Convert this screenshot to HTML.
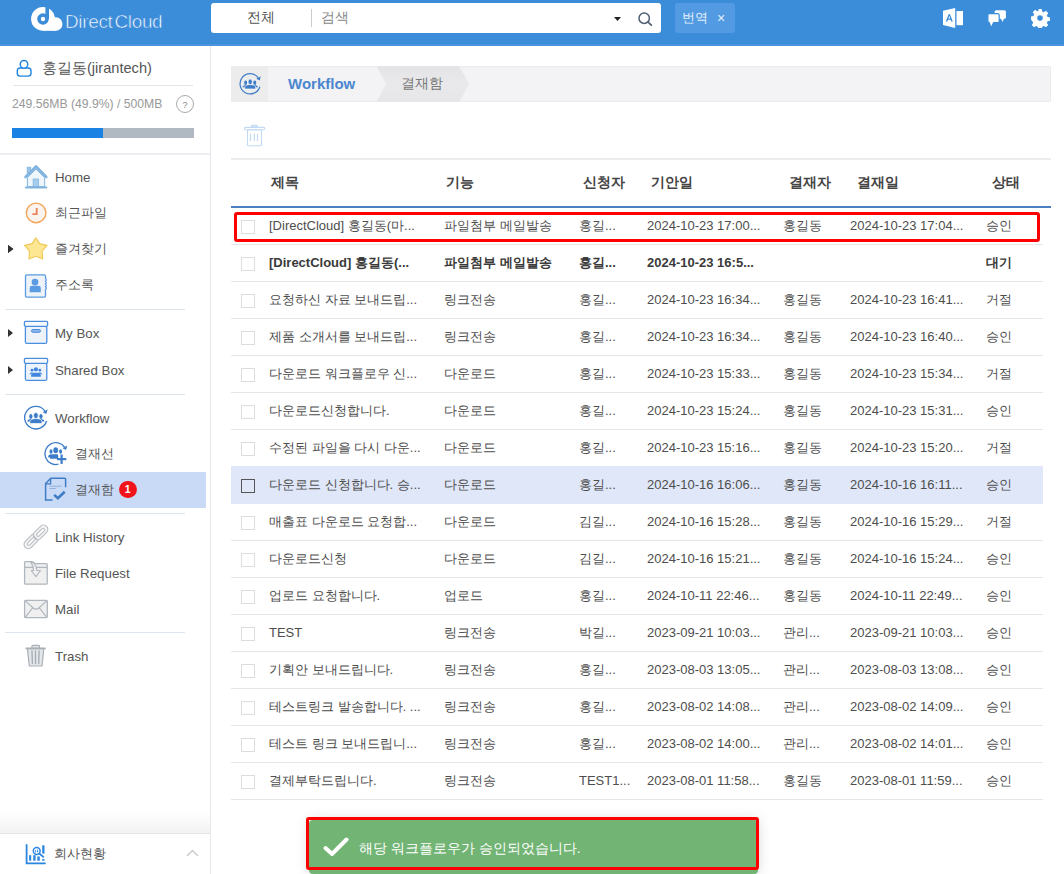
<!DOCTYPE html>
<html><head><meta charset="utf-8">
<style>
*{box-sizing:border-box;margin:0;padding:0}
html,body{width:1064px;height:874px;overflow:hidden;background:#fff;font-family:"Liberation Sans",sans-serif;color:#444}
.abs{position:absolute}
#hdr{position:absolute;left:0;top:0;width:1064px;height:46px;background:#3b8dda;border-bottom:2px solid #4a95de}
#logo-t{position:absolute;left:65px;top:11px;font-size:19px;color:#fff;letter-spacing:-0.35px;word-spacing:-3px;-webkit-text-stroke:0.6px #3b8dda}
#search{position:absolute;left:211px;top:3px;width:450px;height:30px;background:#fff;border-radius:3px}
#search .t1{position:absolute;left:36px;top:6px;font-size:14px;color:#555}
#search .sep{position:absolute;left:100px;top:6px;width:1px;height:18px;background:#ccc}
#search .t2{position:absolute;left:110px;top:6px;font-size:14px;color:#888}
#trans{position:absolute;left:675px;top:3px;width:60px;height:30px;background:#529ae2;border-radius:3px}
#trans .t{position:absolute;left:7px;top:7px;font-size:12.5px;color:#e6f0fb}
#trans .x{position:absolute;left:42px;top:7px;font-size:14px;color:#e6f0fb}
#side{position:absolute;left:0;top:46px;width:211px;height:828px;border-right:1px solid #e6e8ee;background:#fff}
.nav{position:absolute;left:55px;font-size:13.3px;color:#555;line-height:16px}
.sep{position:absolute;left:5px;width:180px;height:1px;background:#dde4ec}
.tri{position:absolute;left:8px;width:0;height:0;border-top:4px solid transparent;border-bottom:4px solid transparent;border-left:5px solid #333}
#main{position:absolute;left:211px;top:46px;width:853px;height:828px}
.row{position:absolute;left:231px;width:812px;height:37px;border-bottom:1px solid #e6e6e8;font-size:13px;color:#4d4d4d}
.row .c{position:absolute;top:10px;line-height:16px;white-space:nowrap}
.row .cb{position:absolute;left:10px;top:12px;width:14px;height:14px;border:1px solid #ddd;background:#fff}
.row.sel{background:#dfe7f8;margin-top:-1px;height:38px;border-bottom-color:#dfe7f8}
.row.sel .c{top:11px}
.row.sel .cb{top:13px}
.row.sel .cb{border-color:#555;background:transparent}
.row.bold{font-weight:bold;color:#3a3a3a}
.th{position:absolute;top:174px;font-size:14px;font-weight:bold;color:#444;line-height:16px}
</style></head><body>
<svg width="0" height="0" style="position:absolute"><defs>
<g id="wf">
  <path d="M10.4 3.2 A10.9 10.9 0 1 1 8.6 -6.7" fill="none" stroke="#3c7cc8" stroke-width="1.3"/>
  <path d="M11.3 -8.2 L6.6 -5.4 L10.2 -3.6 Z" fill="#3c7cc8"/>
  <g fill="#3c7cc8">
    <ellipse cx="-4.9" cy="-1.1" rx="1.6" ry="2.4"/><path d="M-8.4 3.6 Q-8.1 1.4 -5 1.2 L-3.2 1.5 L-4 4Z"/>
    <ellipse cx="4.9" cy="-1.1" rx="1.6" ry="2.4"/><path d="M8.4 3.6 Q8.1 1.4 5 1.2 L3.2 1.5 L4 4Z"/>
  </g>
  <g fill="#3c7cc8" stroke="#fff" stroke-width="0.7">
    <path d="M-6 5.6 V4.6 Q-6 1.3 -1.6 0.9 H1.6 Q6 1.3 6 4.6 V5.6Z"/>
    <ellipse cx="0" cy="-2.1" rx="2.3" ry="3"/>
  </g>
</g></defs></svg>
<div id="hdr"></div>
<svg class="abs" style="left:28px;top:4px" width="38" height="30" viewBox="0 0 38 30">
  <g fill="#fff"><circle cx="15" cy="14.9" r="11.9"/><circle cx="27.7" cy="20" r="6.8"/><rect x="15" y="14" width="12.7" height="12.8"/></g>
  <circle cx="15" cy="15" r="4" fill="none" stroke="#3b8dda" stroke-width="3.6"/>
  <rect x="17.4" y="0" width="3.6" height="15" fill="#3b8dda"/>
</svg>
<div id="logo-t">Direct Cloud</div>
<div id="search"><span class="t1">전체</span><span class="sep"></span><span class="t2">검색</span>
  <svg class="abs" style="left:403px;top:14px" width="7" height="4"><path d="M0 0 L7 0 L3.5 4Z" fill="#222"/></svg>
  <svg class="abs" style="left:427px;top:8px" width="17" height="17" viewBox="0 0 17 17"><circle cx="6.2" cy="7.2" r="5.2" fill="none" stroke="#4d5f72" stroke-width="1.5"/><path d="M10 11 L13.3 14.2" stroke="#4d5f72" stroke-width="1.7" stroke-linecap="round"/></svg>
</div>
<div id="trans"><span class="t">번역</span><span class="x">×</span></div>
<!-- right icons -->
<svg class="abs" style="left:942px;top:8px" width="22" height="21" viewBox="0 0 22 21">
  <path d="M1 2.8 L13.2 0 L13.2 20 L1 17 Z" fill="#fff"/><rect x="14.5" y="3" width="6.5" height="14.2" fill="#fff"/>
  <path d="M3.8 13.5 L6.6 6.2 H8 L10.8 13.5 H9.2 L8.6 11.8 H6 L5.4 13.5 Z M6.4 10.5 H8.2 L7.3 7.8Z" fill="#3b8dda"/>
</svg>
<svg class="abs" style="left:986px;top:9px" width="21" height="18" viewBox="0 0 21 18">
  <rect x="8.6" y="1.2" width="11.3" height="8.5" rx="1.5" fill="#fff"/>
  <path d="M14.5 9 L18 9 L16.8 13 Z" fill="#fff"/>
  <rect x="1.9" y="4.6" width="11.3" height="9" rx="1.5" fill="#fff" stroke="#3b8dda" stroke-width="1.2"/>
  <path d="M3.6 13 L7.2 13 L5.2 17.2 Z" fill="#fff"/>
</svg>
<svg class="abs" style="left:1030px;top:8px" width="20" height="20" viewBox="0 0 20 20">
  <g transform="translate(10 10.1) scale(0.9) translate(-10 -10)">
  <path fill="#fff" fill-rule="evenodd" d="M8.1 0h3.8l.5 2.7 1.9.8 2.3-1.6 2.6 2.6-1.6 2.3.8 1.9 2.7.5v3.8l-2.7.5-.8 1.9 1.6 2.3-2.6 2.6-2.3-1.6-1.9.8-.5 2.7H8.1l-.5-2.7-1.9-.8-2.3 1.6-2.6-2.6 1.6-2.3-.8-1.9L0 11.9V8.1l2.7-.5.8-1.9L1.9 3.4l2.6-2.6 2.3 1.6 1.9-.8zM10 6.9a3.1 3.1 0 1 0 0 6.2 3.1 3.1 0 1 0 0-6.2z"/>
  </g>
</svg>

<div id="side"></div>
<!-- user -->
<svg class="abs" style="left:8px;top:54px" width="32" height="30" viewBox="0 0 32 30">
  <rect x="9.3" y="14" width="13.7" height="8.1" rx="2.8" fill="none" stroke="#1f86e0" stroke-width="1.4"/>
  <circle cx="16" cy="10.3" r="3.8" fill="#fff" stroke="#1f86e0" stroke-width="1.4"/>
</svg>
<div class="abs" style="left:42px;top:59px;font-size:14.6px;color:#555">홍길동(jirantech)</div>
<div class="abs" style="left:13px;top:85px;width:180px;height:1px;background:#e4e4e4"></div>
<div class="abs" style="left:12px;top:97px;font-size:12.2px;color:#999">249.56MB (49.9%) / 500MB</div>
<div class="abs" style="left:176px;top:95px;width:18px;height:18px;border:1px solid #aaa;border-radius:50%;font-size:9px;color:#888;text-align:center;line-height:18px">?</div>
<div class="abs" style="left:12px;top:128px;width:182px;height:10px;background:#b0b8c1"><div style="width:91px;height:10px;background:#1a82e2"></div></div>
<div class="abs" style="left:0;top:153px;width:210px;height:2px;background:#eceef2"></div>

<!-- sidebar icons -->
<div class="abs" style="left:0;top:810px;width:210px;height:24px;background:linear-gradient(to bottom,rgba(0,0,0,0),rgba(0,0,0,0.05))"></div>
<div class="abs" style="left:0;top:833px;width:210px;height:41px;background:#fff;border-top:1px solid #e4e4e4"></div>

<div class="abs" style="left:0;top:472px;width:206px;height:36px;background:#c9daf6"></div>

<svg class="abs" style="left:20px;top:160px" width="32" height="32" viewBox="0 0 32 32">
  <path d="M7.4 17.7 V26.6 H24.7 V17.7 L16 9 Z" fill="#eef5fb" stroke="#7fb3de" stroke-width="1"/>
  <rect x="7.2" y="7.2" width="3.5" height="6" fill="#9cc4e6" stroke="#7fb3de" stroke-width="0.8"/>
  <path d="M5.5 17 L16 6.5 L26.3 17" fill="none" stroke="#80b4df" stroke-width="2.6" stroke-linecap="round" stroke-linejoin="round"/>
  <rect x="13.2" y="19" width="5.3" height="7.5" fill="#a6cdee" stroke="#7fb3de" stroke-width="0.8"/>
  <path d="M6 27.5 H26.3" stroke="#80b4df" stroke-width="2.2" stroke-linecap="round"/>
</svg>
<svg class="abs" style="left:20px;top:196px" width="32" height="32" viewBox="0 0 32 32">
  <circle cx="16.1" cy="16.9" r="9.8" fill="#faf3ee" stroke="#f2a65a" stroke-width="1.4"/>
  <path d="M16.7 12.1 V18.1 H12.4" fill="none" stroke="#e8845e" stroke-width="1.9"/>
</svg>
<svg class="abs" style="left:4px;top:232px" width="48" height="36" viewBox="0 0 48 36">
  <path d="M4 13 L9.5 17 L4 21 Z" fill="#222"/>
  <path d="M31.8 5.7 L35.5 11.6 L43 13.4 L38.1 19.2 L38.6 27 L31.8 24.3 L25 27 L25.5 19.2 L20.6 13.4 L28.1 11.6 Z" fill="#fde792" stroke="#f0c95a" stroke-width="1.2" stroke-linejoin="round"/>
</svg>
<svg class="abs" style="left:20px;top:268px" width="32" height="32" viewBox="0 0 32 32">
  <path d="M6.8 6.8 H24.2 Q25.5 6.8 25.5 8 V10.5 Q27 11.8 25.5 13.3 Q27 14.6 25.5 16 Q27 17.4 25.5 18.8 Q27 20.1 25.5 21.6 V28 Q25.5 29.2 24.2 29.2 H6.8 Q5.5 29.2 5.5 28 V8 Q5.5 6.8 6.8 6.8Z" fill="#eef3fa" stroke="#5b9be1" stroke-width="1.3"/>
  <circle cx="15" cy="14.1" r="3.4" fill="#5b9be1"/>
  <path d="M9.7 24.3 V20 Q9.7 17.8 12 17.8 H18.5 Q20.8 17.8 20.8 20 V24.3 Z" fill="#5b9be1"/>
</svg>
<svg class="abs" style="left:20px;top:315px" width="32" height="32" viewBox="0 0 32 32">
  <rect x="5.4" y="11.3" width="21.4" height="17.1" rx="1.5" fill="#eef3fa" stroke="#4a8ee0" stroke-width="1.3"/>
  <rect x="4.4" y="6.3" width="23.2" height="5" rx="1.2" fill="#f7f9fd" stroke="#4a8ee0" stroke-width="1.3"/>
  <rect x="11.5" y="14.5" width="9" height="2.8" rx="1.4" fill="#8cb6ea" stroke="#4a8ee0" stroke-width="1"/>
</svg>
<svg class="abs" style="left:20px;top:352px" width="32" height="32" viewBox="0 0 32 32">
  <rect x="5.4" y="11.3" width="21.4" height="17.1" rx="1.5" fill="#eef3fa" stroke="#4a8ee0" stroke-width="1.3"/>
  <rect x="4.4" y="6.3" width="23.2" height="5" rx="1.2" fill="#f7f9fd" stroke="#4a8ee0" stroke-width="1.3"/>
  <g fill="#3f86dc"><circle cx="15.9" cy="17.3" r="2.1"/><path d="M11.1 24.7 V23.2 Q11.3 21.3 13.5 20.8 H18.4 Q20.6 21.3 20.8 23.2 V24.7Z"/>
  <circle cx="12" cy="18.2" r="1.4"/><circle cx="19.8" cy="18.2" r="1.4"/><path d="M9.5 22.8 Q9.8 20.5 12 20.2 L13 21 Z M22.3 22.8 Q22 20.5 19.8 20.2 L18.8 21 Z"/></g>
</svg>
<svg class="abs" style="left:20px;top:400px" width="32" height="36" viewBox="0 0 32 36">
  <use href="#wf" transform="translate(15.9 17.7) scale(1.03)"/>
</svg>
<svg class="abs" style="left:40px;top:436px" width="32" height="36" viewBox="0 0 32 36">
  <path d="M18.5 28.2 A10.9 10.9 0 1 1 24.5 11" fill="none" stroke="#3c7cc8" stroke-width="1.3"/>
  <path d="M27.2 9.5 L22.5 12.3 L26.1 14.1 Z" fill="#3c7cc8"/>
  <g fill="#3c7cc8">
    <ellipse cx="11" cy="15.5" rx="1.5" ry="2.2"/><path d="M8 21.3 Q8 19 10.6 18.3 L12.6 18.6 L12.4 21.9Z"/>
    <ellipse cx="20.6" cy="15.5" rx="1.5" ry="2.2"/>
    <ellipse cx="15.7" cy="14.3" rx="2.4" ry="3"/><path d="M10 22.8 V21 Q10.3 18.8 13.2 18.2 H17.8 Q18.5 19.5 18.2 22.8Z"/>
    <rect x="20.5" y="18.5" width="2.2" height="9.4"/><rect x="16.9" y="22" width="9.4" height="2.2"/>
  </g>
</svg>
<svg class="abs" style="left:40px;top:472px" width="32" height="36" viewBox="0 0 32 36">
  <path d="M12.6 28 H5.6 V11.5 L10.8 6.2 H24.6 Q25.6 6.2 25.6 7.2 V15.2" fill="none" stroke="#3f7cc4" stroke-width="1.5"/>
  <path d="M5.6 11.8 H10.6 V6.4" fill="none" stroke="#3f7cc4" stroke-width="1.3"/>
  <path d="M9.5 14.2 H21.6 M9.5 16.5 H15.7" stroke="#8fb0dc" stroke-width="1"/>
  <path d="M14.2 22.9 L17.9 26.3 L24.7 19.8" fill="none" stroke="#3f7cc4" stroke-width="2.6"/>
</svg>
<svg class="abs" style="left:20px;top:519px" width="32" height="36" viewBox="0 0 32 36">
  <g fill="#f3f3f3" stroke="#b9bec4" stroke-width="1.1">
    <rect x="-4.3" y="-8.5" width="8.6" height="17" rx="4.3" transform="translate(11.3 22.4) rotate(45)"/>
  </g>
  <rect x="-1.5" y="-5" width="3" height="10" rx="1.5" transform="translate(11.3 22.4) rotate(45)" fill="#fff" stroke="#b9bec4" stroke-width="1.1"/>
  <g fill="#f3f3f3" stroke="#b9bec4" stroke-width="1.1">
    <rect x="-4.3" y="-8.5" width="8.6" height="17" rx="4.3" transform="translate(20.6 13.3) rotate(45)"/>
  </g>
  <rect x="-1.5" y="-5" width="3" height="10" rx="1.5" transform="translate(20.6 13.3) rotate(45)" fill="#fff" stroke="#b9bec4" stroke-width="1.1"/>
  <path d="M13.2 16.5 L17.5 20.8" stroke="#b9bec4" stroke-width="1.1"/>
</svg>
<svg class="abs" style="left:20px;top:555px" width="32" height="36" viewBox="0 0 32 36">
  <path d="M5.5 6.6 H11.5 Q13.5 6.6 14.8 8.6 H26.2 Q27.2 8.6 27.2 9.6 V28.3 Q27.2 29.2 26.2 29.2 H5.6 Q4.6 29.2 4.6 28.3 V7.6 Q4.6 6.6 5.5 6.6Z" fill="#f0f0f0" stroke="#b0b6bd" stroke-width="1.3"/>
  <path d="M4.8 12.4 H27" stroke="#b0b6bd" stroke-width="1.3"/>
  <path d="M10.5 6.8 Q16.3 8 16.8 15.5 H20.5 L15.9 21.7 L11.3 15.5 H13.6 Q13.5 10.5 10.5 6.8Z" fill="#f0f0f0" stroke="#b0b6bd" stroke-width="1.1" stroke-linejoin="round"/>
</svg>
<svg class="abs" style="left:20px;top:591px" width="32" height="36" viewBox="0 0 32 36">
  <rect x="4.6" y="9.3" width="22.7" height="17.3" rx="1" fill="#f0f0f0" stroke="#b0b6bd" stroke-width="1.3"/>
  <path d="M5 9.6 L13.5 17.3 Q16 19 18.5 17.3 L27 9.6 M5.4 26.2 L12.8 16.7 M26.6 26.2 L19.2 16.7" fill="none" stroke="#b0b6bd" stroke-width="1.2"/>
</svg>
<svg class="abs" style="left:20px;top:638px" width="32" height="36" viewBox="0 0 32 36">
  <path d="M7.4 10.6 L9.3 28 H22 L23.8 10.6 Z" fill="#e4e7ea" stroke="#aab0b8" stroke-width="1.2" stroke-linejoin="round"/>
  <rect x="11.8" y="7.4" width="7.8" height="3" rx="1" fill="#e4e7ea" stroke="#aab0b8" stroke-width="1.1"/>
  <path d="M6.2 10.4 H25" stroke="#aab0b8" stroke-width="1.6" stroke-linecap="round"/>
  <path d="M12 13 L12.4 25.6 M15.5 13 V25.6 M19.1 13 L18.7 25.6" stroke="#a3aab2" stroke-width="1.3" stroke-linecap="round"/>
</svg>
<svg class="abs" style="left:20px;top:836px" width="32" height="36" viewBox="0 0 32 36">
  <path d="M6.6 8.2 V27.4 H25.7" fill="none" stroke="#2a86e0" stroke-width="1.8"/>
  <g fill="#2a86e0"><rect x="9.1" y="19.2" width="2.1" height="5.5"/><rect x="13.2" y="19.2" width="2.4" height="5.5"/><rect x="17.3" y="20.5" width="2.5" height="4.2"/><rect x="22.2" y="23" width="2.3" height="1.7"/><rect x="22.2" y="9.3" width="2.3" height="8.2"/></g>
  <circle cx="16.7" cy="15" r="3.4" fill="#fff" stroke="#2a86e0" stroke-width="1.5"/>
  <path d="M19.2 17.5 L23.9 21.4" stroke="#2a86e0" stroke-width="1.8"/>
  <path d="M15.6 14 V16.5 M17.6 13.5 V16.5" stroke="#2a86e0" stroke-width="0.9"/>
</svg>
<!-- nav -->
<div class="nav" style="top:170px">Home</div>
<div class="nav" style="top:205px">최근파일</div>
<i class="tri" style="top:245px"></i>
<div class="nav" style="top:241px">즐겨찾기</div>
<div class="nav" style="top:277px">주소록</div>
<div class="sep" style="top:309px"></div>
<i class="tri" style="top:329px"></i>
<div class="nav" style="top:326px">My Box</div>
<i class="tri" style="top:366px"></i>
<div class="nav" style="top:363px">Shared Box</div>
<div class="sep" style="top:394px"></div>
<div class="nav" style="top:411px">Workflow</div>
<div class="nav" style="left:75px;top:446px">결재선</div>
<div class="nav" style="left:75px;top:482px">결재함</div>
<div class="abs" style="left:119px;top:481px;width:17.5px;height:17px;border-radius:50%;background:#f0141a;color:#fff;font-size:10.5px;font-weight:bold;text-align:center;line-height:17px">1</div>
<div class="sep" style="top:513px"></div>
<div class="nav" style="top:530px">Link History</div>
<div class="nav" style="top:566px">File Request</div>
<div class="nav" style="top:602px">Mail</div>
<div class="sep" style="top:632px"></div>
<div class="nav" style="top:649px">Trash</div>
<!-- bottom -->
<div class="nav" style="left:54px;top:846px">회사현황</div>
<svg class="abs" style="left:186px;top:849px" width="13" height="8"><path d="M1 7 L6.5 1.5 L12 7" fill="none" stroke="#ccc" stroke-width="1.5"/></svg>

<!-- breadcrumb -->
<div class="abs" style="left:231px;top:66px;width:820px;height:36px;background:#f3f3f5;border:1px solid #ebebed"></div>
<div class="abs" style="left:231px;top:66px;width:37px;height:36px;background:#ececec"></div>
<svg class="abs" style="left:235px;top:70px" width="30" height="28" viewBox="0 0 30 28"><use href="#wf" transform="translate(15.2 13.8) scale(0.93)"/></svg>
<div class="abs" style="left:288px;top:75px;font-size:15px;font-weight:bold;color:#4a86cf">Workflow</div>
<svg class="abs" style="left:376px;top:66px" width="95" height="36" viewBox="0 0 95 36">
  <defs><linearGradient id="bg1" x1="0" y1="0" x2="0" y2="1"><stop offset="0" stop-color="#e4e4e6"/><stop offset="0.5" stop-color="#e9e9eb"/><stop offset="1" stop-color="#e6e6e8"/></linearGradient></defs>
  <path d="M0.5 0 H83 L93 18 L83 36 H0.5 L10 18Z" fill="url(#bg1)"/>
</svg>
<div class="abs" style="left:401px;top:75px;font-size:14px;color:#777">결재함</div>

<!-- trash -->
<svg class="abs" style="left:238px;top:118px" width="34" height="34" viewBox="0 0 34 34">
  <g fill="none" stroke="#c2daf3" stroke-width="1.1">
    <rect x="13.6" y="7.2" width="5.8" height="2.1" rx="0.8" fill="#d8e7f7"/>
    <rect x="6.4" y="9.4" width="20.4" height="2.4" rx="1.2"/>
    <rect x="9.5" y="11.7" width="14" height="16" rx="0.8"/>
  </g>
  <path d="M12.5 16 V22.6 M16.3 16 V22.6 M19.5 16 V22.6" stroke="#c2daf3" stroke-width="1.2" stroke-linecap="round"/>
</svg>

<!-- table header -->
<div class="abs" style="left:231px;top:158px;width:820px;height:2px;background:#ececee"></div>
<div class="th" style="left:271px">제목</div>
<div class="th" style="left:446px">기능</div>
<div class="th" style="left:583px">신청자</div>
<div class="th" style="left:651px">기안일</div>
<div class="th" style="left:789px">결재자</div>
<div class="th" style="left:857px">결재일</div>
<div class="th" style="left:992px">상태</div>
<div class="abs" style="left:231px;top:206px;width:820px;height:2px;background:#4a7fc1"></div>

<div class="row" style="top:208px"><i class="cb"></i><span class="c" style="left:38px">[DirectCloud] 홍길동(마...</span><span class="c" style="left:213px">파일첨부 메일발송</span><span class="c" style="left:348px">홍길...</span><span class="c" style="left:416px">2024-10-23 17:00...</span><span class="c" style="left:552px">홍길동</span><span class="c" style="left:619px">2024-10-23 17:04...</span><span class="c" style="left:755px">승인</span></div>
<div class="row bold" style="top:245px"><i class="cb"></i><span class="c" style="left:38px">[DirectCloud] 홍길동(...</span><span class="c" style="left:213px">파일첨부 메일발송</span><span class="c" style="left:348px">홍길...</span><span class="c" style="left:416px">2024-10-23 16:5...</span><span class="c" style="left:552px"></span><span class="c" style="left:619px"></span><span class="c" style="left:755px">대기</span></div>
<div class="row" style="top:282px"><i class="cb"></i><span class="c" style="left:38px">요청하신 자료 보내드립...</span><span class="c" style="left:213px">링크전송</span><span class="c" style="left:348px">홍길...</span><span class="c" style="left:416px">2024-10-23 16:34...</span><span class="c" style="left:552px">홍길동</span><span class="c" style="left:619px">2024-10-23 16:41...</span><span class="c" style="left:755px">거절</span></div>
<div class="row" style="top:319px"><i class="cb"></i><span class="c" style="left:38px">제품 소개서를 보내드립...</span><span class="c" style="left:213px">링크전송</span><span class="c" style="left:348px">홍길...</span><span class="c" style="left:416px">2024-10-23 16:34...</span><span class="c" style="left:552px">홍길동</span><span class="c" style="left:619px">2024-10-23 16:40...</span><span class="c" style="left:755px">승인</span></div>
<div class="row" style="top:356px"><i class="cb"></i><span class="c" style="left:38px">다운로드 워크플로우 신...</span><span class="c" style="left:213px">다운로드</span><span class="c" style="left:348px">홍길...</span><span class="c" style="left:416px">2024-10-23 15:33...</span><span class="c" style="left:552px">홍길동</span><span class="c" style="left:619px">2024-10-23 15:34...</span><span class="c" style="left:755px">거절</span></div>
<div class="row" style="top:393px"><i class="cb"></i><span class="c" style="left:38px">다운로드신청합니다.</span><span class="c" style="left:213px">다운로드</span><span class="c" style="left:348px">홍길...</span><span class="c" style="left:416px">2024-10-23 15:24...</span><span class="c" style="left:552px">홍길동</span><span class="c" style="left:619px">2024-10-23 15:31...</span><span class="c" style="left:755px">승인</span></div>
<div class="row" style="top:430px"><i class="cb"></i><span class="c" style="left:38px">수정된 파일을 다시 다운...</span><span class="c" style="left:213px">다운로드</span><span class="c" style="left:348px">홍길...</span><span class="c" style="left:416px">2024-10-23 15:16...</span><span class="c" style="left:552px">홍길동</span><span class="c" style="left:619px">2024-10-23 15:20...</span><span class="c" style="left:755px">거절</span></div>
<div class="row sel" style="top:467px"><i class="cb"></i><span class="c" style="left:38px">다운로드 신청합니다. 승...</span><span class="c" style="left:213px">다운로드</span><span class="c" style="left:348px">홍길...</span><span class="c" style="left:416px">2024-10-16 16:06...</span><span class="c" style="left:552px">홍길동</span><span class="c" style="left:619px">2024-10-16 16:11...</span><span class="c" style="left:755px">승인</span></div>
<div class="row" style="top:504px"><i class="cb"></i><span class="c" style="left:38px">매출표 다운로드 요청합...</span><span class="c" style="left:213px">다운로드</span><span class="c" style="left:348px">김길...</span><span class="c" style="left:416px">2024-10-16 15:28...</span><span class="c" style="left:552px">홍길동</span><span class="c" style="left:619px">2024-10-16 15:29...</span><span class="c" style="left:755px">거절</span></div>
<div class="row" style="top:541px"><i class="cb"></i><span class="c" style="left:38px">다운로드신청</span><span class="c" style="left:213px">다운로드</span><span class="c" style="left:348px">김길...</span><span class="c" style="left:416px">2024-10-16 15:21...</span><span class="c" style="left:552px">홍길동</span><span class="c" style="left:619px">2024-10-16 15:24...</span><span class="c" style="left:755px">승인</span></div>
<div class="row" style="top:578px"><i class="cb"></i><span class="c" style="left:38px">업로드 요청합니다.</span><span class="c" style="left:213px">업로드</span><span class="c" style="left:348px">홍길...</span><span class="c" style="left:416px">2024-10-11 22:46...</span><span class="c" style="left:552px">홍길동</span><span class="c" style="left:619px">2024-10-11 22:49...</span><span class="c" style="left:755px">승인</span></div>
<div class="row" style="top:615px"><i class="cb"></i><span class="c" style="left:38px">TEST</span><span class="c" style="left:213px">링크전송</span><span class="c" style="left:348px">박길...</span><span class="c" style="left:416px">2023-09-21 10:03...</span><span class="c" style="left:552px">관리...</span><span class="c" style="left:619px">2023-09-21 10:03...</span><span class="c" style="left:755px">승인</span></div>
<div class="row" style="top:652px"><i class="cb"></i><span class="c" style="left:38px">기획안 보내드립니다.</span><span class="c" style="left:213px">링크전송</span><span class="c" style="left:348px">홍길...</span><span class="c" style="left:416px">2023-08-03 13:05...</span><span class="c" style="left:552px">관리...</span><span class="c" style="left:619px">2023-08-03 13:08...</span><span class="c" style="left:755px">승인</span></div>
<div class="row" style="top:689px"><i class="cb"></i><span class="c" style="left:38px">테스트링크 발송합니다. ...</span><span class="c" style="left:213px">링크전송</span><span class="c" style="left:348px">홍길...</span><span class="c" style="left:416px">2023-08-02 14:08...</span><span class="c" style="left:552px">관리...</span><span class="c" style="left:619px">2023-08-02 14:09...</span><span class="c" style="left:755px">승인</span></div>
<div class="row" style="top:726px"><i class="cb"></i><span class="c" style="left:38px">테스트 링크 보내드립니...</span><span class="c" style="left:213px">링크전송</span><span class="c" style="left:348px">홍길...</span><span class="c" style="left:416px">2023-08-02 14:00...</span><span class="c" style="left:552px">관리...</span><span class="c" style="left:619px">2023-08-02 14:01...</span><span class="c" style="left:755px">승인</span></div>
<div class="row" style="top:763px"><i class="cb"></i><span class="c" style="left:38px">결제부탁드립니다.</span><span class="c" style="left:213px">링크전송</span><span class="c" style="left:348px">TEST1...</span><span class="c" style="left:416px">2023-08-01 11:58...</span><span class="c" style="left:552px">홍길동</span><span class="c" style="left:619px">2023-08-01 11:59...</span><span class="c" style="left:755px">승인</span></div>

<!-- red box row 0 -->
<div class="abs" style="left:234px;top:212px;width:806px;height:30px;border:3px solid #f00;border-radius:3px"></div>

<!-- toast -->
<div class="abs" style="left:309px;top:820px;width:449px;height:54px;background:#72b474;border-radius:4px;box-shadow:0 0 14px rgba(0,0,0,0.17)"></div>
<svg class="abs" style="left:323px;top:837px" width="26" height="20" viewBox="0 0 26 20"><path d="M2.5 11 L9 17 L23.5 2.5" fill="none" stroke="#fff" stroke-width="4" stroke-linecap="round" stroke-linejoin="round"/></svg>
<div class="abs" style="left:359px;top:840px;font-size:14px;color:#fff">해당 워크플로우가 승인되었습니다.</div>
<div class="abs" style="left:306px;top:817px;width:453px;height:53px;border:3px solid #f00;border-radius:3px"></div>
</body></html>
